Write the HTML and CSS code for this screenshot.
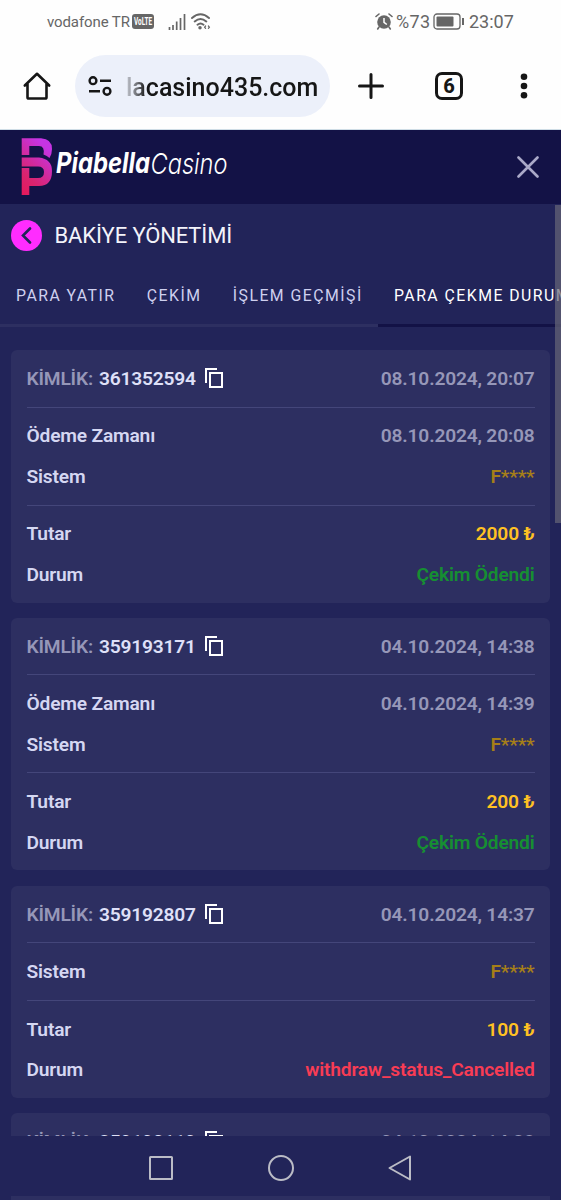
FILE: index.html
```html
<!DOCTYPE html>
<html lang="tr">
  <head>
    <meta charset="UTF-8" />
    <meta name="viewport" content="width=device-width, initial-scale=1" />
    <title>PiabellaCasino</title>
    <link rel="stylesheet" href="styles.css">
  </head>
  <body>
    <div class="status-bar">
      <span class="carrier">vodafone TR</span>
      <svg class="volte" width="22" height="15" viewBox="0 0 22 15">
        <rect width="22" height="15" rx="3" fill="#666" />
        <text x="2" y="11.200" textLength="18" lengthAdjust="spacingAndGlyphs">VoLTE</text>
      </svg>
      <svg class="signal" width="18" height="16" viewBox="0 0 18 16">
        <path d="M1.500 13v3M5 11v5M8.700 7.500v8.500M12.500 4v12M16.500 0v16" stroke="#666" stroke-width="1.700" />
      </svg>
      <svg class="wifi" width="20" height="17" viewBox="0 0 20 17" fill="none" stroke="#666" stroke-width="1.900" stroke-linecap="round">
        <path d="M1 5Q9.500-2.500 18 5M3.700 8.500q5.800-5 11.600 0M6.500 11.700q3-2.500 6 0" />
        <circle cx="9" cy="14.800" r="0.800" fill="#666" />
        <path d="M14.600 13l-1 1.200 1 1.200M17.400 13l1 1.200-1 1.200" stroke-width="1.200" />
      </svg>
      <span class="status-right">
        <svg width="18" height="17" viewBox="0 0 18 17">
          <circle cx="9" cy="9" r="6.800" fill="#666" />
          <path d="M1 3.500L4 1M17 3.500L14 1M4 14l-1.300 2M14 14l1.300 2" stroke="#666" stroke-width="1.600" stroke-linecap="round" />
          <path d="M9 5v4.300l2.800 2.200" fill="none" stroke="#fff" stroke-width="1.500" />
        </svg>
        <span class="percent">%73</span>
        <svg width="32" height="17" viewBox="0 0 32 17">
          <rect x="1" y="1" width="26" height="15" rx="3" fill="none" stroke="#666" stroke-width="1.300" />
          <rect x="3.500" y="3.500" width="17" height="10" rx="1" fill="#666" />
          <path d="M30 5v7" stroke="#666" stroke-width="2" />
        </svg>
        <span class="clock">23:07</span>
      </span>
    </div>

    <div class="browser-bar">
      <svg class="home" width="30" height="30" viewBox="0 0 30 30" fill="none" stroke="#161616" stroke-width="2.600" stroke-linejoin="round" stroke-linecap="round">
        <path d="M2.800 14.500L15 2.800 27.200 14.500M5.500 12.500v13.700q0 1.300 1.300 1.300h16.400q1.300 0 1.300-1.300V12.500" />
      </svg>
      <div class="url-box">
        <svg width="24" height="20" viewBox="0 0 24 20" fill="none" stroke="#161616" stroke-width="2.400">
          <circle cx="5" cy="4.700" r="3.400" />
          <path d="M12 4.700h11M1 15.300h11" />
          <circle cx="19" cy="15.300" r="3.400" />
        </svg>
        <span class="url">lacasino435.com</span>
      </div>
      <svg class="plus" width="26" height="26" viewBox="0 0 26 26">
        <path d="M13 1.500v23M1.500 13h23" stroke="#161616" stroke-width="3" stroke-linecap="round" />
      </svg>
      <span class="tab-count">6</span>
      <svg class="dots" width="8" height="26" viewBox="0 0 8 26" fill="#161616">
        <circle cx="4" cy="3.700" r="3.300" />
        <circle cx="4" cy="13" r="3.300" />
        <circle cx="4" cy="22.300" r="3.300" />
      </svg>
    </div>

    <header class="site-header">
      <svg class="logo" width="220" height="60" viewBox="0 0 220 60">
        <defs>
          <linearGradient id="mark" x1="0" y1="1" x2="0.500" y2="0">
            <stop offset="0" stop-color="#e6185a" />
            <stop offset="0.350" stop-color="#d92470" />
            <stop offset="1" stop-color="#c634e4" />
          </linearGradient>
        </defs>
        <path fill="url(#mark)" d="M0.700 1.300H20Q31 2 31 12Q31 17 28.500 21Q26 18.500 22.500 17.500Q24 9 18 9H8.300V18H0.700ZM0.700 20.500H18Q31 22 31 34Q31 49 18 49H8.300V41H17Q23 41 23 35Q23 29.500 17 29.500H0.700ZM0.700 31H8.300V58H0.700Z" />
        <text class="logo-bold" x="35" y="36" textLength="94" lengthAdjust="spacingAndGlyphs">Piabella</text>
        <text class="logo-thin" x="129.500" y="36.500" textLength="77" lengthAdjust="spacingAndGlyphs">Casino</text>
      </svg>
      <svg class="close" width="22" height="22" viewBox="0 0 22 22">
        <path d="M1.500 1.500l19 19M20.500 1.500l-19 19" stroke="#aaa9c8" stroke-width="2.600" stroke-linecap="round" />
      </svg>
    </header>

    <main class="content">
      <div class="page-title">
        <span class="back">
          <svg width="11" height="17" viewBox="0 0 11 17">
            <path d="M9 1.500L2 8.500l7 7" fill="none" stroke="#222459" stroke-width="2.600" stroke-linecap="round" />
          </svg>
        </span>
        <h1>BAKİYE YÖNETİMİ</h1>
      </div>

      <nav class="tabs">
        <a class="tab">PARA YATIR</a>
        <a class="tab">ÇEKİM</a>
        <a class="tab">İŞLEM GEÇMİŞİ</a>
        <a class="tab active">PARA ÇEKME DURUMU</a>
      </nav>

      <div class="cards">
        <section class="card">
          <div class="group">
            <div class="row">
              <span class="muted">KİMLİK: <b>361352594</b>
                <svg class="copy" viewBox="0 0 18 20"><path d="M1 15V1h11M5 5h12v14H5z" /></svg>
              </span>
              <span class="muted">08.10.2024, 20:07</span>
            </div>
          </div>
          <div class="group">
            <div class="row"><span>Ödeme Zamanı</span><span class="muted">08.10.2024, 20:08</span></div>
            <div class="row"><span>Sistem</span><span class="system">F****</span></div>
          </div>
          <div class="group">
            <div class="row"><span>Tutar</span><span class="amount">2000 ₺</span></div>
            <div class="row"><span>Durum</span><span class="paid">Çekim Ödendi</span></div>
          </div>
        </section>

        <section class="card">
          <div class="group">
            <div class="row">
              <span class="muted">KİMLİK: <b>359193171</b>
                <svg class="copy" viewBox="0 0 18 20"><path d="M1 15V1h11M5 5h12v14H5z" /></svg>
              </span>
              <span class="muted">04.10.2024, 14:38</span>
            </div>
          </div>
          <div class="group">
            <div class="row"><span>Ödeme Zamanı</span><span class="muted">04.10.2024, 14:39</span></div>
            <div class="row"><span>Sistem</span><span class="system">F****</span></div>
          </div>
          <div class="group">
            <div class="row"><span>Tutar</span><span class="amount">200 ₺</span></div>
            <div class="row"><span>Durum</span><span class="paid">Çekim Ödendi</span></div>
          </div>
        </section>

        <section class="card">
          <div class="group">
            <div class="row">
              <span class="muted">KİMLİK: <b>359192807</b>
                <svg class="copy" viewBox="0 0 18 20"><path d="M1 15V1h11M5 5h12v14H5z" /></svg>
              </span>
              <span class="muted">04.10.2024, 14:37</span>
            </div>
          </div>
          <div class="group">
            <div class="row"><span>Sistem</span><span class="system">F****</span></div>
          </div>
          <div class="group">
            <div class="row"><span>Tutar</span><span class="amount">100 ₺</span></div>
            <div class="row"><span>Durum</span><span class="cancelled">withdraw_status_Cancelled</span></div>
          </div>
        </section>

        <section class="card">
          <div class="group">
            <div class="row">
              <span class="muted">KİMLİK: <b>359190119</b>
                <svg class="copy" viewBox="0 0 18 20"><path d="M1 15V1h11M5 5h12v14H5z" /></svg>
              </span>
              <span class="muted">04.10.2024, 14:28</span>
            </div>
          </div>
        </section>
      </div>
      <div class="scrollbar"></div>
    </main>

    <div class="system-nav">
      <svg width="26" height="26" viewBox="0 0 26 26"><rect x="2" y="2" width="22" height="22" rx="0.500" /></svg>
      <svg width="26" height="26" viewBox="0 0 26 26"><circle cx="13" cy="13" r="12" /></svg>
      <svg width="26" height="26" viewBox="0 0 26 26"><path d="M23 1.500v23L2.500 13z" /></svg>
    </div>
    <div class="card-edge"></div>
  </body>
</html>
```

FILE: styles.css
```css
* {
  margin: 0;
  padding: 0;
  box-sizing: border-box;
}
body {
  display: flex;
  flex-direction: column;
  height: 1200px;
  overflow: hidden;
  font-family: Roboto, "Liberation Sans", sans-serif;
  background-color: #222459;
}
svg {
  display: block;
  flex: none;
}

/* Phone status bar */
.status-bar {
  display: flex;
  align-items: center;
  height: 43px;
  padding: 0 46px 0 47px;
  background: #fefefe;
  color: #666;
  white-space: nowrap;
}
.carrier {
  width: 82px;
  font-size: 15px;
  letter-spacing: -0.1px;
}
.volte {
  margin-left: 3px;
}
.volte text {
  fill: #fff;
  font-size: 10.5px;
  font-weight: 700;
}
.signal {
  margin-left: 14px;
}
.wifi {
  margin-left: 5px;
}
.status-right {
  display: flex;
  align-items: center;
  margin-left: auto;
  font-size: 18px;
}
.percent {
  width: 35px;
  margin: 0 2px 0 3px;
  letter-spacing: 0.3px;
}
.clock {
  width: 46px;
  margin-left: 4px;
}

/* Browser toolbar */
.browser-bar {
  display: flex;
  align-items: center;
  height: 87px;
  background: #fefefe;
  border-bottom: 1px solid #cfdde6;
}
.home {
  margin-left: 22px;
}
.url-box {
  display: flex;
  align-items: center;
  width: 255px;
  height: 62px;
  margin-left: 23px;
  padding-left: 13px;
  border-radius: 31px;
  background: #ecf0fa;
}
.url {
  margin: 2px 0 0 14px;
  font-size: 25px;
  font-weight: 500;
  background: linear-gradient(90deg, #c4c7d0 0, #77797f 10px, #161616 20px);
  -webkit-background-clip: text;
  background-clip: text;
  color: transparent;
}
.plus {
  margin-left: 28px;
}
.tab-count {
  width: 28px;
  height: 28px;
  margin-left: 51px;
  border: 3px solid #161616;
  border-radius: 7px;
  color: #161616;
  font-size: 20px;
  font-weight: 800;
  line-height: 23px;
  text-align: center;
}
.dots {
  margin-left: 57px;
}

/* Site header */
.site-header {
  display: flex;
  flex: none;
  justify-content: space-between;
  align-items: center;
  height: 74px;
  padding: 0 22px 0 21px;
  background: #131246;
}
.logo text {
  fill: #fff;
  font-family: Inter, sans-serif;
  font-style: oblique 8deg;
  font-feature-settings: "cv11";
}
.logo .logo-bold {
  font-size: 29px;
  font-weight: 700;
}
.logo .logo-thin {
  font-size: 29px;
  font-weight: 300;
}

/* Balance page */
.content {
  position: relative;
  height: 932px;
  overflow: hidden;
}
.page-title {
  display: flex;
  align-items: center;
  height: 62px;
  padding-left: 11px;
}
.back {
  display: flex;
  align-items: center;
  justify-content: center;
  width: 31px;
  height: 31px;
  border-radius: 50%;
  background: #ff2cff;
}
h1 {
  margin-left: 12.5px;
  color: #f3f3fa;
  font-size: 22px;
  font-weight: 400;
  letter-spacing: -0.12px;
}
.tabs {
  display: flex;
  width: max-content;
}
.tab {
  height: 61px;
  padding: 0 15.3px 0 16px;
  border-bottom: 3px solid #2d2f61;
  color: #cfd0ef;
  font-size: 15.8px;
  line-height: 59px;
  letter-spacing: 1.48px;
}
.tab.active {
  border-color: #131246;
  color: #fff;
}
.cards {
  display: flex;
  flex-direction: column;
  gap: 15.3px;
  padding: 23.2px 11px 0;
}
.card {
  padding: 0 15.5px;
  border-radius: 6px;
  background: #2d2f61;
}
.group {
  padding: 8px 0;
}
.group + .group {
  border-top: 1px solid #44467a;
}
.row {
  display: flex;
  justify-content: space-between;
  align-items: center;
  height: 40.5px;
  color: #d5d7f2;
  font-size: 19.2px;
  font-weight: 600;
  letter-spacing: -0.19px;
}
.muted {
  display: flex;
  align-items: center;
  color: #9697b8;
}
.muted b {
  margin-left: 6px;
  color: #dfe0f8;
  font-weight: 600;
}
.copy {
  width: 18px;
  height: 20px;
  margin-left: 9.5px;
  fill: none;
  stroke: #fff;
  stroke-width: 2;
}
.system {
  color: #a67f18;
}
.amount {
  color: #ffc123;
}
.paid {
  color: #168f32;
}
.cancelled {
  color: #f83c54;
}
.scrollbar {
  position: absolute;
  top: 1px;
  right: 0;
  width: 6px;
  height: 318px;
  background: rgba(102, 102, 120, 0.7);
}

/* Android navigation */
.system-nav {
  display: flex;
  flex: none;
  justify-content: center;
  align-items: center;
  gap: 93.5px;
  height: 60px;
  padding: 4px 0 0;
  fill: none;
  stroke: #bbbcc6;
  stroke-width: 2;
  stroke-linejoin: round;
}
.card-edge {
  height: 4px;
  margin: 0 11px;
  background: #2d2f61;
}
```
